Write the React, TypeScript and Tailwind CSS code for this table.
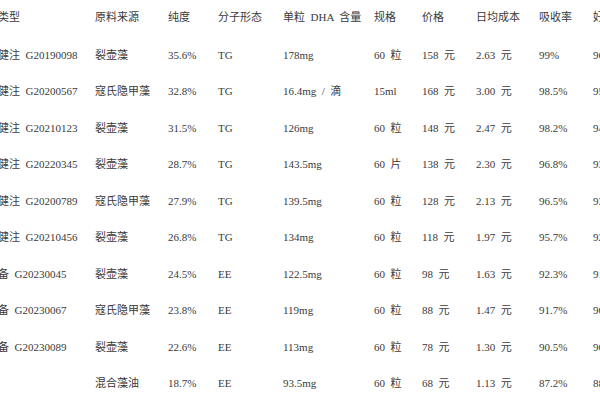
const headers = [
  "类型",
  "原料来源",
  "纯度",
  "分子形态",
  "单粒 DHA 含量",
  "规格",
  "价格",
  "日均成本",
  "吸收率",
  "好评率",
];

const rows: string[][] = [
  ["健注 G20190098", "裂壶藻", "35.6%", "TG", "178mg", "60 粒", "158 元", "2.63 元", "99%", "96%"],
  ["健注 G20200567", "寇氏隐甲藻", "32.8%", "TG", "16.4mg / 滴", "15ml", "168 元", "3.00 元", "98.5%", "95%"],
  ["健注 G20210123", "裂壶藻", "31.5%", "TG", "126mg", "60 粒", "148 元", "2.47 元", "98.2%", "94%"],
  ["健注 G20220345", "裂壶藻", "28.7%", "TG", "143.5mg", "60 片", "138 元", "2.30 元", "96.8%", "93%"],
  ["健注 G20200789", "寇氏隐甲藻", "27.9%", "TG", "139.5mg", "60 粒", "128 元", "2.13 元", "96.5%", "93%"],
  ["健注 G20210456", "裂壶藻", "26.8%", "TG", "134mg", "60 粒", "118 元", "1.97 元", "95.7%", "92%"],
  ["备 G20230045", "裂壶藻", "24.5%", "EE", "122.5mg", "60 粒", "98 元", "1.63 元", "92.3%", "91%"],
  ["备 G20230067", "寇氏隐甲藻", "23.8%", "EE", "119mg", "60 粒", "88 元", "1.47 元", "91.7%", "90%"],
  ["备 G20230089", "裂壶藻", "22.6%", "EE", "113mg", "60 粒", "78 元", "1.30 元", "90.5%", "90%"],
  ["", "混合藻油", "18.7%", "EE", "93.5mg", "60 粒", "68 元", "1.13 元", "87.2%", "88%"],
];

const grid =
  "grid grid-cols-[97px_73px_50px_65px_91px_48px_54px_63px_54px_80px]";

export default function App() {
  return (
    <div
      className="w-[600px] h-[400px] overflow-hidden bg-white text-[#3a3a3a] text-[11px] [word-spacing:2.75px]"
      style={{ fontFamily: '"Liberation Serif", "Noto Sans CJK SC", serif' }}
    >
      <div className="-ml-[2px] -mt-[3px]">
        {/* 表头 */}
        <div className={`${grid} h-[39.5px] items-center`}>
          {headers.map((h) => (
            <div key={h} className="whitespace-nowrap">
              {h}
            </div>
          ))}
        </div>

        {/* 数据行 */}
        {rows.map((r, i) => (
          <div key={i} className={`${grid} h-[36.56px] items-center`}>
            {r.map((c, j) => (
              <div key={j} className="whitespace-nowrap">
                {c}
              </div>
            ))}
          </div>
        ))}
      </div>
    </div>
  );
}
